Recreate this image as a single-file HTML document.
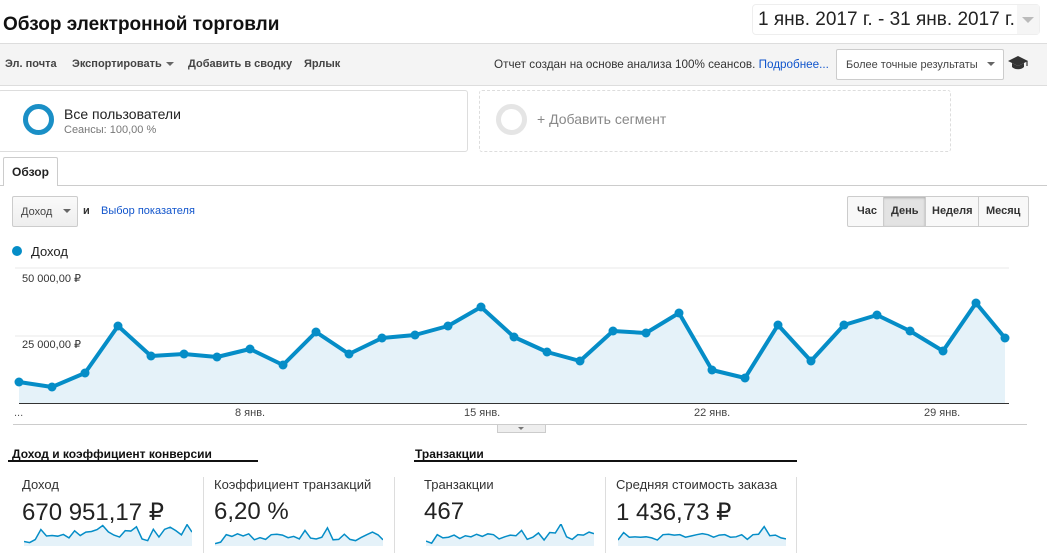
<!DOCTYPE html>
<html><head><meta charset="utf-8"><style>
*{margin:0;padding:0;box-sizing:border-box}
body{width:1047px;height:553px;overflow:hidden;background:#fff;font-family:"Liberation Sans",Arial,sans-serif;color:#222;position:relative}
.a{position:absolute;white-space:nowrap}
.b{font-weight:bold}
</style></head><body>
<div class="a" style="left:3px;top:14px;font-size:19px;font-weight:bold;color:#111">Обзор электронной торговли</div>
<div class="a" style="left:752px;top:4px;width:288px;height:31px;border:1px solid #eee;border-radius:4px;font-size:19px;padding:4px 0 0 5px;color:#222">1 янв. 2017 г. - 31 янв. 2017 г.</div>
<div class="a" style="left:1017px;top:5px;width:22px;height:29px;background:#f5f5f5"></div>
<div class="a" style="left:1022px;top:17px;border-left:6px solid transparent;border-right:6px solid transparent;border-top:6px solid #bbb"></div>
<div class="a" style="left:0;top:43px;width:1047px;height:43px;background:#f4f4f4;border-top:1px solid #ddd;border-bottom:1px solid #ddd"></div>
<div class="a b" style="left:5px;top:58px;font-size:11px;color:#444">Эл. почта</div>
<div class="a b" style="left:72px;top:58px;font-size:11px;color:#444">Экспортировать</div>
<div class="a" style="left:166px;top:62px;border-left:4px solid transparent;border-right:4px solid transparent;border-top:4px solid #666"></div>
<div class="a b" style="left:188px;top:58px;font-size:11px;color:#444">Добавить в сводку</div>
<div class="a b" style="left:304px;top:58px;font-size:11px;color:#444">Ярлык</div>
<div class="a" style="left:494px;top:58px;font-size:11.7px;color:#333">Отчет создан на основе анализа 100% сеансов. <span style="color:#15c">Подробнее...</span></div>
<div class="a" style="left:836px;top:49px;width:168px;height:31px;background:#fff;border:1px solid #ccc;border-radius:2px;font-size:11px;padding:9px 0 0 9px;color:#444">Более точные результаты</div>
<div class="a" style="left:987px;top:62px;border-left:4px solid transparent;border-right:4px solid transparent;border-top:4px solid #666"></div>
<svg class="a" style="left:1007px;top:55px" width="22" height="16" viewBox="0 0 22 16"><path d="M11 1L21 6L11 11L1 6Z" fill="#333"/><path d="M5 8V12C8 15 14 15 17 12V8L11 11Z" fill="#333"/><path d="M20 6V11" stroke="#333" stroke-width="1.2"/></svg>
<div class="a" style="left:-2px;top:90px;width:470px;height:62px;border:1px solid #ddd;border-radius:3px"></div>
<div class="a" style="left:23px;top:104px;width:31px;height:31px;border-radius:50%;border:5px solid #1a8fc6"></div>
<div class="a" style="left:64px;top:106px;font-size:14px;color:#222">Все пользователи</div>
<div class="a" style="left:64px;top:124px;font-size:11px;color:#777">Сеансы: 100,00 %</div>
<div class="a" style="left:479px;top:90px;width:472px;height:62px;border:1px dashed #ddd;border-radius:3px"></div>
<div class="a" style="left:496px;top:104px;width:31px;height:31px;border-radius:50%;border:5px solid #e5e5e5"></div>
<div class="a" style="left:537px;top:111px;font-size:14px;color:#888">+ Добавить сегмент</div>
<div class="a" style="left:0;top:185px;width:1047px;border-top:1px solid #ccc"></div>
<div class="a" style="left:3px;top:157px;width:55px;height:29px;background:#fff;border:1px solid #ccc;border-bottom:none;border-radius:2px 2px 0 0;font-size:12px;font-weight:bold;padding:7px 0 0 8px">Обзор</div>
<div class="a" style="left:12px;top:196px;width:66px;height:31px;border:1px solid #ccc;border-radius:2px;background:linear-gradient(#fafafa,#eee);font-size:11px;padding:9px 0 0 8px;color:#444">Доход</div>
<div class="a" style="left:63px;top:209px;border-left:4px solid transparent;border-right:4px solid transparent;border-top:4px solid #666"></div>
<div class="a b" style="left:83px;top:205px;font-size:11px;color:#333">и</div>
<div class="a" style="left:101px;top:205px;font-size:11px;color:#15c">Выбор показателя</div>
<div class="a" style="left:847px;top:196px;width:182px;height:31px;border:1px solid #ccc;border-radius:2px;background:#f8f8f8"></div>
<div class="a" style="left:883px;top:197px;width:42px;height:29px;background:#e3e3e3;box-shadow:inset 0 1px 2px #aaa"></div>
<div class="a" style="left:883px;top:197px;height:29px;border-left:1px solid #ccc"></div>
<div class="a" style="left:925px;top:197px;height:29px;border-left:1px solid #ccc"></div>
<div class="a" style="left:978px;top:197px;height:29px;border-left:1px solid #ccc"></div>
<div class="a b" style="left:857px;top:205px;font-size:11px;color:#333">Час</div>
<div class="a b" style="left:891px;top:205px;font-size:11px;color:#333">День</div>
<div class="a b" style="left:932px;top:205px;font-size:11px;color:#333">Неделя</div>
<div class="a b" style="left:986px;top:205px;font-size:11px;color:#333">Месяц</div>
<div class="a" style="left:12px;top:246px;width:10px;height:10px;border-radius:50%;background:#058dc7"></div>
<div class="a" style="left:31px;top:244px;font-size:13px;color:#222">Доход</div>
<svg class="a" style="left:0;top:0" width="1047" height="440">
<line x1="15" y1="268" x2="1009" y2="268" stroke="#e8e8e8"/>
<line x1="15" y1="336" x2="1009" y2="336" stroke="#e8e8e8"/>
<polygon fill="#e5f2f9" points="19,403 19,382 52,387 85,373 118,326 151,356 184,354 217,357 250,349 283,365 316,332 349,354 382,338 415,335 448,326 481,307 514,337 547,352 580,361 613,331 646,333 679,313 712,370 745,378 778,325 811,361 844,325 877,315 910,331 943,351 976,303 1005,338 1005,403"/>
<line x1="19" y1="403.5" x2="1009" y2="403.5" stroke="#333"/>
<polyline fill="none" stroke="#058dc7" stroke-width="4" stroke-linejoin="round" points="19,382 52,387 85,373 118,326 151,356 184,354 217,357 250,349 283,365 316,332 349,354 382,338 415,335 448,326 481,307 514,337 547,352 580,361 613,331 646,333 679,313 712,370 745,378 778,325 811,361 844,325 877,315 910,331 943,351 976,303 1005,338"/>
<g fill="#058dc7">
<circle cx="19" cy="382" r="4.5"/><circle cx="52" cy="387" r="4.5"/><circle cx="85" cy="373" r="4.5"/><circle cx="118" cy="326" r="4.5"/><circle cx="151" cy="356" r="4.5"/><circle cx="184" cy="354" r="4.5"/><circle cx="217" cy="357" r="4.5"/><circle cx="250" cy="349" r="4.5"/><circle cx="283" cy="365" r="4.5"/><circle cx="316" cy="332" r="4.5"/><circle cx="349" cy="354" r="4.5"/><circle cx="382" cy="338" r="4.5"/><circle cx="415" cy="335" r="4.5"/><circle cx="448" cy="326" r="4.5"/><circle cx="481" cy="307" r="4.5"/><circle cx="514" cy="337" r="4.5"/><circle cx="547" cy="352" r="4.5"/><circle cx="580" cy="361" r="4.5"/><circle cx="613" cy="331" r="4.5"/><circle cx="646" cy="333" r="4.5"/><circle cx="679" cy="313" r="4.5"/><circle cx="712" cy="370" r="4.5"/><circle cx="745" cy="378" r="4.5"/><circle cx="778" cy="325" r="4.5"/><circle cx="811" cy="361" r="4.5"/><circle cx="844" cy="325" r="4.5"/><circle cx="877" cy="315" r="4.5"/><circle cx="910" cy="331" r="4.5"/><circle cx="943" cy="351" r="4.5"/><circle cx="976" cy="303" r="4.5"/><circle cx="1005" cy="338" r="4.5"/>
</g>
<line x1="13" y1="424.5" x2="1027" y2="424.5" stroke="#ccc"/>
</svg>
<div class="a" style="left:22px;top:272px;font-size:11px;color:#333">50 000,00 ₽</div>
<div class="a" style="left:22px;top:338px;font-size:11px;color:#333">25 000,00 ₽</div>
<div class="a" style="left:14px;top:407px;font-size:11px;color:#555">...</div>
<div class="a" style="left:235px;top:407px;font-size:11px;color:#444">8 янв.</div>
<div class="a" style="left:464px;top:407px;font-size:11px;color:#444">15 янв.</div>
<div class="a" style="left:694px;top:407px;font-size:11px;color:#444">22 янв.</div>
<div class="a" style="left:924px;top:407px;font-size:11px;color:#444">29 янв.</div>
<div class="a" style="left:497px;top:425px;width:49px;height:8px;background:#eee;border:1px solid #ccc;border-top:none"></div>
<div class="a" style="left:518px;top:427px;border-left:3px solid transparent;border-right:3px solid transparent;border-top:3px solid #777"></div>
<div class="a b" style="left:12px;top:447px;font-size:12px;color:#111">Доход и коэффициент конверсии</div>
<div class="a" style="left:8px;top:460px;width:250px;border-top:2px solid #111"></div>
<div class="a b" style="left:415px;top:447px;font-size:12px;color:#111">Транзакции</div>
<div class="a" style="left:414px;top:460px;width:383px;border-top:2px solid #111"></div>
<div class="a" style="left:203px;top:477px;height:76px;border-left:1px solid #ddd"></div>
<div class="a" style="left:394px;top:477px;height:76px;border-left:1px solid #ddd"></div>
<div class="a" style="left:605px;top:477px;height:76px;border-left:1px solid #ddd"></div>
<div class="a" style="left:796px;top:477px;height:76px;border-left:1px solid #ddd"></div>
<div class="a" style="left:22px;top:477px;font-size:13px;color:#333">Доход</div>
<div class="a" style="left:22px;top:498px;font-size:24px;color:#222">670 951,17 ₽</div>
<div class="a" style="left:214px;top:477px;font-size:13px;color:#333">Коэффициент транзакций</div>
<div class="a" style="left:214px;top:498px;font-size:24px;color:#222">6,20 %</div>
<div class="a" style="left:424px;top:477px;font-size:13px;color:#333">Транзакции</div>
<div class="a" style="left:424px;top:498px;font-size:24px;color:#222">467</div>
<div class="a" style="left:616px;top:477px;font-size:13px;color:#333">Средняя стоимость заказа</div>
<div class="a" style="left:616px;top:498px;font-size:24px;color:#222">1 436,73 ₽</div>
<svg class="a" style="left:24px;top:524px" width="168" height="22" viewBox="19 300 986 103" preserveAspectRatio="none"><polygon fill="#e5f2f9" points="19,403 19,382 52,387 85,373 118,326 151,356 184,354 217,357 250,349 283,365 316,332 349,354 382,338 415,335 448,326 481,307 514,337 547,352 580,361 613,331 646,333 679,313 712,370 745,378 778,325 811,361 844,325 877,315 910,331 943,351 976,303 1005,338 1005,403"/><polyline fill="none" stroke="#058dc7" stroke-width="1.5" vector-effect="non-scaling-stroke" points="19,382 52,387 85,373 118,326 151,356 184,354 217,357 250,349 283,365 316,332 349,354 382,338 415,335 448,326 481,307 514,337 547,352 580,361 613,331 646,333 679,313 712,370 745,378 778,325 811,361 844,325 877,315 910,331 943,351 976,303 1005,338"/></svg>
<svg class="a" style="left:215px;top:524px" width="168" height="22" viewBox="19 300 986 103" preserveAspectRatio="none"><polygon fill="#e5f2f9" points="19,403 19,392 52,385 85,350 118,358 151,346 184,356 217,346 250,374 283,364 316,372 349,350 382,348 415,352 448,364 481,358 514,370 547,330 580,366 613,370 646,362 679,318 712,374 745,372 778,348 811,372 844,378 877,363 910,350 943,338 976,351 1005,374 1005,403"/><polyline fill="none" stroke="#058dc7" stroke-width="1.5" vector-effect="non-scaling-stroke" points="19,392 52,385 85,350 118,358 151,346 184,356 217,346 250,374 283,364 316,372 349,350 382,348 415,352 448,364 481,358 514,370 547,330 580,366 613,370 646,362 679,318 712,374 745,372 778,348 811,372 844,378 877,363 910,350 943,338 976,351 1005,374"/></svg>
<svg class="a" style="left:426px;top:524px" width="168" height="22" viewBox="19 300 986 103" preserveAspectRatio="none"><polygon fill="#e5f2f9" points="19,403 19,380 52,390 85,350 118,365 151,362 184,352 217,368 250,355 283,360 316,348 349,358 382,346 415,350 448,370 481,360 514,352 547,355 580,330 613,372 646,362 679,342 712,375 745,340 778,342 811,300 844,360 877,372 910,350 943,352 976,338 1005,345 1005,403"/><polyline fill="none" stroke="#058dc7" stroke-width="1.5" vector-effect="non-scaling-stroke" points="19,380 52,390 85,350 118,365 151,362 184,352 217,368 250,355 283,360 316,348 349,358 382,346 415,350 448,370 481,360 514,352 547,355 580,330 613,372 646,362 679,342 712,375 745,340 778,342 811,300 844,360 877,372 910,350 943,352 976,338 1005,345"/></svg>
<svg class="a" style="left:618px;top:524px" width="168" height="22" viewBox="19 300 986 103" preserveAspectRatio="none"><polygon fill="#e5f2f9" points="19,403 19,375 52,340 85,362 118,360 151,362 184,360 217,365 250,375 283,350 316,348 349,352 382,350 415,362 448,356 481,350 514,345 547,350 580,362 613,352 646,350 679,362 712,360 745,350 778,372 811,350 844,348 877,312 910,355 943,352 976,365 1005,370 1005,403"/><polyline fill="none" stroke="#058dc7" stroke-width="1.5" vector-effect="non-scaling-stroke" points="19,375 52,340 85,362 118,360 151,362 184,360 217,365 250,375 283,350 316,348 349,352 382,350 415,362 448,356 481,350 514,345 547,350 580,362 613,352 646,350 679,362 712,360 745,350 778,372 811,350 844,348 877,312 910,355 943,352 976,365 1005,370"/></svg>
</body></html>
